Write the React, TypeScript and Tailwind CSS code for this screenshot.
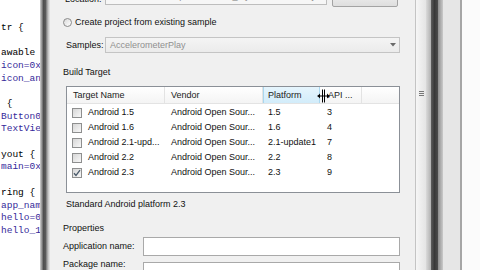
import React from 'react';

type Kind = 'k' | 'f';

// horizontally scrolled R.java in the editor behind the dialog
const CODE: [string, Kind][] = [
  ['', 'k'],
  ['', 'k'],
  ['tr {', 'k'],
  ['', 'k'],
  ['awable {', 'k'],
  ['icon=0x7f020000;', 'f'],
  ['icon_android=0x7f020001;', 'f'],
  ['', 'k'],
  [' {', 'k'],
  ['Button01=0x7f050000;', 'f'],
  ['TextView01=0x7f050001;', 'f'],
  ['', 'k'],
  ['yout {', 'k'],
  ['main=0x7f030000;', 'f'],
  ['', 'k'],
  ['ring {', 'k'],
  ['app_name=0x7f040001;', 'f'],
  ['hello=0x7f040000;', 'f'],
  ['hello_1=0x7f040002;', 'f'],
  ['', 'k'],
  ['', 'k'],
];

const TARGETS = [
  { name: 'Android 1.5', vendor: 'Android Open Sour...', platform: '1.5', api: '3', checked: false },
  { name: 'Android 1.6', vendor: 'Android Open Sour...', platform: '1.6', api: '4', checked: false },
  { name: 'Android 2.1-upd...', vendor: 'Android Open Sour...', platform: '2.1-update1', api: '7', checked: false },
  { name: 'Android 2.2', vendor: 'Android Open Sour...', platform: '2.2', api: '8', checked: false },
  { name: 'Android 2.3', vendor: 'Android Open Sour...', platform: '2.3', api: '9', checked: true },
];

function CodePane() {
  return (
    <div className="w-[40px] shrink-0 overflow-hidden bg-white pl-[1px] font-['Liberation_Mono',monospace] text-[9.5px] leading-[12.7px]">
      <div className="mt-[-3.5px]">
        {CODE.map(([t, k], i) => (
          <div key={i} className={`h-[12.7px] whitespace-pre ${k === 'f' ? 'text-[#35299a]' : 'text-black'}`}>
            {t || ' '}
          </div>
        ))}
      </div>
    </div>
  );
}

function CheckBox({ checked }: { checked: boolean }) {
  return (
    <div className="flex h-[10px] w-[10px] shrink-0 items-center justify-center border border-[#8e8f8f] bg-[linear-gradient(135deg,#d6d6d6,#f8f8f8)]">
      {checked && (
        <svg width="8" height="8" viewBox="0 0 8 8">
          <path d="M1 4.2 L3 6.4 L7 1.2" fill="none" stroke="#4a5a6a" strokeWidth="1.3" />
        </svg>
      )}
    </div>
  );
}

function TargetTable() {
  return (
    <div className="ml-[3px] mt-[8px] flex h-[107px] w-[334px] shrink-0 flex-col border border-[#8b9097] bg-white">
      <div className="relative flex h-[17px] shrink-0 border-b border-[#e3e3e3] bg-[linear-gradient(#ffffff,#f4f4f4)] text-[#222]">
        <div className="flex w-[98px] items-center border-r border-[#e3e3e3] pl-[6px]">Target Name</div>
        <div className="flex w-[98px] items-center border-r border-[#e3e3e3] pl-[6px]">Vendor</div>
        <div className="flex w-[57px] items-center border-x border-[#a9d7ef] bg-[linear-gradient(#e6f5fd,#d2ecfa)] pl-[4px]">Platform</div>
        <div className="flex w-[42px] items-center border-r border-[#e3e3e3] pl-[8px]">API ...</div>
        <div className="flex-1" />
        <svg className="absolute left-[250px] top-[2px]" width="13" height="14" viewBox="0 0 13 14">
          <path d="M5.5 0.5 V13.5 M7.5 0.5 V13.5" stroke="#000" strokeWidth="1" />
          <path d="M0.5 7 H12.5" stroke="#000" strokeWidth="1" />
          <path d="M0.5 7 L3 4.5 V9.5 Z M12.5 7 L10 4.5 V9.5 Z" fill="#000" />
        </svg>
      </div>
      <div className="flex flex-col pt-[1px]">
        {TARGETS.map((t) => (
          <div key={t.name} className="flex h-[15px] items-center whitespace-nowrap">
            <div className="flex w-[98px] items-center pl-[5px]">
              <CheckBox checked={t.checked} />
              <span className="ml-[6px]">{t.name}</span>
            </div>
            <div className="w-[98px] pl-[6px]">{t.vendor}</div>
            <div className="w-[57px] pl-[5px]">{t.platform}</div>
            <div className="w-[42px] pl-[7px]">{t.api}</div>
          </div>
        ))}
      </div>
    </div>
  );
}

function Dialog() {
  return (
    <div className="flex w-[365px] shrink-0 flex-col bg-[#f0f0f0] pl-[13px] pr-[15px] text-[#111]">
      {/* Location row, mostly scrolled out of view */}
      <div className="mt-[-13px] flex h-[20px] shrink-0 items-center">
        <span className="ml-[2px] mt-[5px] w-[40px]">Location:</span>
        <div className="mt-[1px] flex h-[17px] w-[222px] items-center self-start overflow-hidden whitespace-nowrap border border-[#bdbdbd] bg-[#f6f6f6] pl-[3px] text-[#8a8a8a]">
          C:\Android\Workspace\Android_MyFirstAndroidProject
        </div>
        <div className="ml-[5px] flex h-[20px] w-[66px] items-center justify-center rounded-[2px] border border-[#a3a3a3] bg-[linear-gradient(#f6f6f6,#dedede)] text-[#444]">
          Browse...
        </div>
      </div>

      <div className="mt-[8px] flex h-[14px] shrink-0 items-center">
        <div className="h-[9px] w-[9px] rounded-full border border-[#8a8a8a] bg-[linear-gradient(135deg,#dadada,#ffffff)]" />
        <span className="ml-[3px]">Create project from existing sample</span>
      </div>

      <div className="mt-[8px] flex h-[16px] shrink-0 items-center">
        <span className="ml-[3px] w-[39px]">Samples:</span>
        <div className="flex h-[16px] flex-1 items-center justify-between border border-[#c4c4c4] bg-[linear-gradient(#f4f4f4,#ebebeb)] pl-[4px] pr-[3px] text-[#909090]">
          <span>AccelerometerPlay</span>
          <svg width="6" height="4" viewBox="0 0 6 4">
            <path d="M0 0 H6 L3 3.5 Z" fill="#6a6a6a" />
          </svg>
        </div>
      </div>

      <div className="mt-[13px] flex h-[12px] shrink-0 items-center">Build Target</div>

      <TargetTable />

      <div className="ml-[3px] mt-[5px] flex h-[12px] shrink-0 items-center">Standard Android platform 2.3</div>

      <div className="mt-[12px] flex h-[12px] shrink-0 items-center">Properties</div>

      <div className="mt-[3px] flex h-[19px] shrink-0 items-center">
        <span className="w-[80px]">Application name:</span>
        <div className="h-[19px] flex-1 border border-[#a9a9a9] bg-white" />
      </div>

      <div className="mt-[6px] flex h-[19px] shrink-0 items-start">
        <span className="mt-[-2px] w-[80px]">Package name:</span>
        <div className="h-[19px] flex-1 border border-[#a9a9a9] bg-white" />
      </div>
    </div>
  );
}

function RightEdge() {
  return (
    <div className="flex flex-1">
      <div className="w-px bg-[#c4c4c4]" />
      <div className="flex w-[10px] flex-col items-center bg-[linear-gradient(to_right,#f6f6f6,#e4e4e4)] pt-[91px]">
        <div className="flex flex-col gap-[1px]">
          <div className="h-px w-[5px] bg-[#777]" />
          <div className="h-px w-[5px] bg-[#777]" />
          <div className="h-px w-[5px] bg-[#777]" />
        </div>
      </div>
      <div className="w-[5px] bg-[linear-gradient(to_right,#dadada,#b0b0b0)]" />
      <div className="w-[7px] bg-[linear-gradient(to_right,#5c5c5c,#383838,#4c4c4c)]" />
      <div className="w-[5px] bg-[linear-gradient(to_right,#8c8c8c,#cacaca)]" />
      <div className="w-[17px] bg-[#e6e6e6]" />
      <div className="w-[2px] bg-[#a6a6a6]" />
      <div className="flex-1 bg-[#fbfbfb]" />
    </div>
  );
}

export default function App() {
  return (
    <div className="flex h-[270px] w-[480px] overflow-hidden bg-white font-['Liberation_Sans',Arial,sans-serif] text-[9px] leading-none">
      <CodePane />
      <div className="w-[10px] shrink-0 bg-[linear-gradient(to_right,#d2d2d2_0%,#8c8c8c_20%,#4f4f4f_35%,#5a5a5a_55%,#9a9a9a_70%,#c8c8c8_85%,#e8e8e8_100%)]" />
      <Dialog />
      <RightEdge />
    </div>
  );
}
